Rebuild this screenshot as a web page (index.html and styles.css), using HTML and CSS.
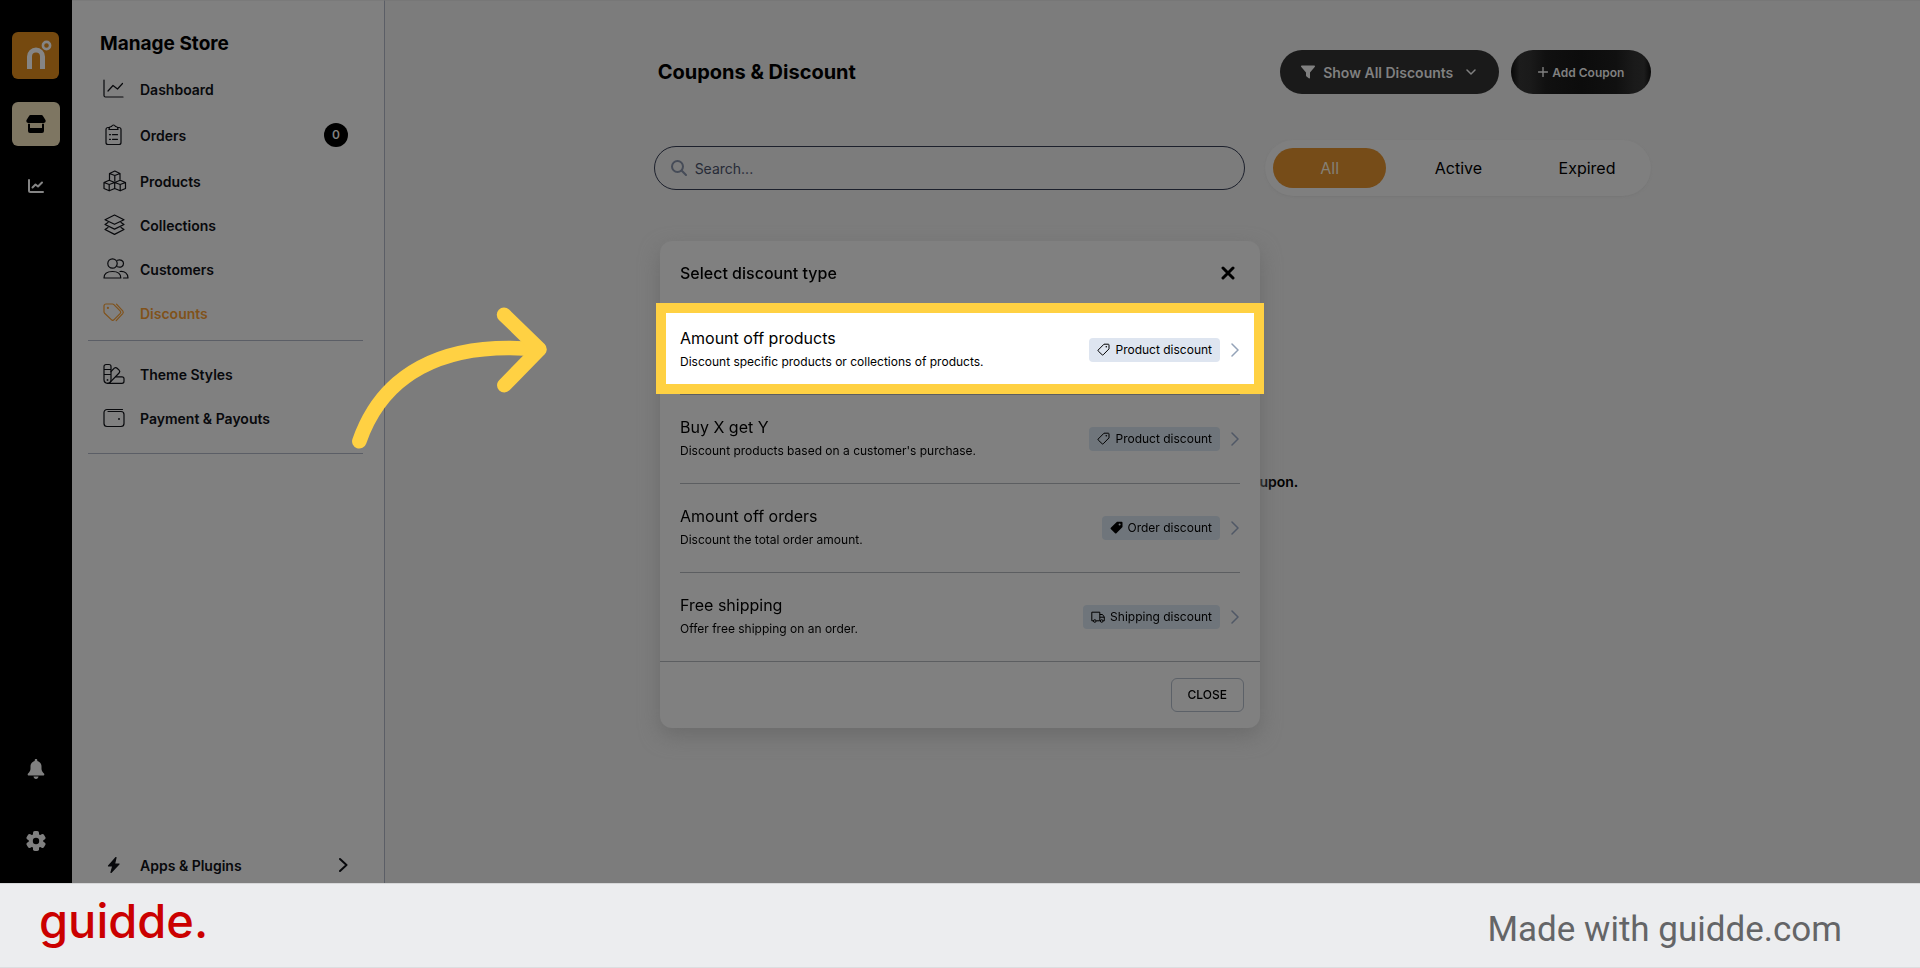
FILE: index.html
```html
<!DOCTYPE html>
<html lang="en">
<head>
<meta charset="utf-8">
<meta name="viewport" content="width=device-width, initial-scale=1">
<title>Coupons &amp; Discount</title>
<link rel="stylesheet" href="styles.css">
</head>
<body>
<div class="app">
  <nav class="rail" aria-label="Workspace">
    <a class="rail-logo" href="#" aria-label="Home">
      <svg width="47" height="47" viewBox="0 0 47 47" fill="none" stroke="#858585">
        <path d="M17.500 37V24.500a6.500 6.500 0 0 1 13 0V37" stroke-width="5"/>
        <circle cx="34.500" cy="13.500" r="3.600" stroke-width="2.600"/>
      </svg>
    </a>
    <a class="rail-item rail-item-active" href="#" aria-label="Store">
      <svg width="20" height="20" viewBox="0 0 20 20" fill="#000">
        <path d="M4.500 1h11c.6 0 1 .3 1.300.8l2.500 4c.9 1.500 0 3.200-1.700 3.200H2.400C.7 9-.2 7.300.7 5.800l2.500-4C3.500 1.300 3.900 1 4.500 1z"/>
        <path d="M2 9.800h2V14h12V9.800h2V17a2 2 0 0 1-2 2H4a2 2 0 0 1-2-2z"/>
      </svg>
    </a>
    <a class="rail-item" href="#" aria-label="Analytics">
      <svg width="16" height="16" viewBox="0 0 16 16" fill="none" stroke="#858585" stroke-width="2" stroke-linecap="round" stroke-linejoin="round">
        <path d="M1 2v10.500c0 .8.700 1.500 1.500 1.500H15"/><path d="M4.500 9.500l3-3 2.500 2L14 4.500"/>
      </svg>
    </a>
    <a class="rail-item rail-push" href="#" aria-label="Notifications">
      <svg width="18" height="20" viewBox="0 0 18 20" fill="#808080">
        <path d="M9 0c.8 0 1.300.5 1.300 1.200v.7c2.600.6 4.200 2.900 4.200 5.500v2.200c0 1.600.6 2.900 1.700 4.100l.8.900c.7.800.2 1.900-.8 1.900H1.800C.8 16.500.3 15.400 1 14.600l.8-.9c1.100-1.200 1.700-2.500 1.700-4.100V7.400c0-2.600 1.600-4.900 4.200-5.500v-.7C7.700.5 8.200 0 9 0z"/>
        <path d="M6.500 17.500h5C11.300 19 10.300 20 9 20s-2.300-1-2.500-2.500z"/>
      </svg>
    </a>
    <a class="rail-item" href="#" aria-label="Settings">
      <svg width="20" height="20" viewBox="0 0 20 20">
        <g fill="#808080"><circle cx="10" cy="10" r="7.300"/>
        <rect x="7" y="0" width="6" height="20" rx="1.800"/>
        <rect x="7" y="0" width="6" height="20" rx="1.800" transform="rotate(60 10 10)"/>
        <rect x="7" y="0" width="6" height="20" rx="1.800" transform="rotate(120 10 10)"/></g>
        <circle cx="10" cy="10" r="3.200" fill="#000"/>
      </svg>
    </a>
  </nav>

  <aside class="sidebar">
    <h2 class="sidebar-title">Manage Store</h2>
    <nav class="menu" aria-label="Manage store">
      <a class="menu-item" href="#">
        <svg class="menu-icon" viewBox="0 0 26 22"><path d="M1 2v15.500c0 .8.700 1.500 1.500 1.500H20"/><path d="M5 13l5-5.500 4.500 3.500L19.500 5.500"/></svg>
        Dashboard
      </a>
      <a class="menu-item menu-item-tall" href="#">
        <svg class="menu-icon" viewBox="0 0 26 22"><path d="M6.500 3.500H5a2 2 0 0 0-2 2v13a2 2 0 0 0 2 2h11a2 2 0 0 0 2-2v-13a2 2 0 0 0-2-2h-1.500"/><path d="M6 5.500c0-2 1-3 2.500-3 .5-1 1-1.500 2-1.500s1.500.5 2 1.500c1.500 0 2.500 1 2.500 3z"/><path d="M6.500 10.700h1M6.500 15.300h1M9.500 10.700h5M9.500 15.300h5"/></svg>
        Orders
        <span class="count">0</span>
      </a>
      <a class="menu-item" href="#">
        <svg class="menu-icon" viewBox="0 0 26 22"><path d="M6.500 9.500V3.500L11.800 1l5.200 2.500v6M6.500 3.500l5.300 2 5.200-2M11.800 5.500V11M1 12.500l5.200-2.300 5.500 2.300v6l-5.500 2.300L1 18.500zM1 12.500l5.200 2 5.500-2M6.200 14.500v6.300M11.700 12.500l5.500-2.300 5.300 2.300v6l-5.300 2.300-5.500-2.300M11.700 12.500l5.500 2 5.300-2M17.200 14.500v6.300"/></svg>
        Products
      </a>
      <a class="menu-item" href="#">
        <svg class="menu-icon" viewBox="0 0 26 22"><path d="M11.500 1L21 5.700l-9.500 4.600L2 5.700z"/><path d="M5 8.500l-3 2 9.500 4.600 9.500-4.600-3-2"/><path d="M5 13.500l-3 2 9.500 4.900 9.500-4.900-3-2"/></svg>
        Collections
      </a>
      <a class="menu-item" href="#">
        <svg class="menu-icon" viewBox="0 0 26 22"><circle cx="9.500" cy="5.500" r="4.700"/><path d="M14.500 2.300c3-1.200 6 .4 6 3.200s-3 4.500-6 3.300"/><path d="M1 20c0-4 3-6.500 8.500-6.500S17.800 16 17.800 20z"/><path d="M17 13.500c4.800-.5 8 2 8 6.500h-4.500"/></svg>
        Customers
      </a>
      <a class="menu-item menu-item-current" href="#" aria-current="page">
        <svg class="menu-icon" viewBox="0 0 26 22"><path d="M1 4a2 2 0 0 1 2-2h6.500c.5 0 1 .2 1.400.6l6.200 6.200c.8.8.8 2 0 2.800l-6 6c-.8.800-2 .800-2.800 0L1.600 11.200A2 2 0 0 1 1 9.800z"/><path d="M13.500 2.200l6.200 6.700c.7.800.7 1.900 0 2.700l-6.500 7"/><circle cx="4.900" cy="5.900" r=".5"/></svg>
        Discounts
      </a>
    </nav>
    <hr class="rule">
    <nav class="menu menu-second" aria-label="Store setup">
      <a class="menu-item" href="#">
        <svg class="menu-icon" viewBox="0 0 26 22"><path d="M3 1.500h3a2 2 0 0 1 2 2v13.300a3.500 3.500 0 0 1-7 0V3.500a2 2 0 0 1 2-2zM1 6.500h7M1 11.500h7"/><path d="M8 8.500l3.300-3.300a2 2 0 0 1 2.800 0l2 2a2 2 0 0 1 0 2.800L7 19.300"/><path d="M13 13.800h6a2 2 0 0 1 2 2v2.500a2 2 0 0 1-2 2H4.500"/><circle cx="4.500" cy="17" r=".3"/></svg>
        Theme Styles
      </a>
      <a class="menu-item" href="#">
        <svg class="menu-icon" viewBox="0 0 26 22"><path d="M19.500 2.500H4a3 3 0 0 0-3 3v11a3 3 0 0 0 3 3h14a3 3 0 0 0 3-3v-9a3 3 0 0 0-3-3H5"/><circle cx="16" cy="12" r=".4"/></svg>
        Payment &amp; Payouts
      </a>
    </nav>
    <hr class="rule">
    <a class="menu-item apps" href="#">
      <svg class="menu-icon" viewBox="0 0 26 22"><path d="M13 3.500L5.500 12h4.300L8 18.500 16 10h-4.500z" fill="currentColor"/></svg>
      Apps &amp; Plugins
      <svg class="apps-arrow" width="9" height="16" viewBox="0 0 9 16"><path d="M1 2l6.500 6L1 14"/></svg>
    </a>
  </aside>

  <main class="main">
    <div class="content">
      <header class="page-head">
        <h1 class="page-title">Coupons &amp; Discount</h1>
        <div class="filter">
          <svg width="14" height="14" viewBox="0 0 14 14" fill="#808080"><path d="M1 .5h12c.9 0 1.300 1 .7 1.600L9 7.500v5.300c0 .7-.7.9-1.200.5l-2.300-1.800c-.3-.2-.5-.5-.5-.9V7.500L.3 2.100C-.3 1.500.1.500 1 .5z"/></svg>
          <select class="filter-select" aria-label="Filter discounts"><option>Show All Discounts</option></select>
          <svg width="10" height="6" viewBox="0 0 10 6" fill="none" stroke="#808080" stroke-width="1.500" stroke-linecap="round" stroke-linejoin="round"><path d="M1 1l4 4 4-4"/></svg>
        </div>
        <button class="add" type="button">
          <svg width="10" height="10" viewBox="0 0 10 10" stroke="#808080" stroke-width="1.400" stroke-linecap="round"><path d="M5 .5v9M.5 5h9"/></svg>
          Add Coupon
        </button>
      </header>

      <div class="tools">
        <label class="search">
          <svg width="16" height="16" viewBox="0 0 16 16" fill="none" stroke="#464c58" stroke-width="2" stroke-linecap="round"><circle cx="6.500" cy="6.500" r="5.500"/><path d="M10.800 10.800L15 15"/></svg>
          <input class="search-input" type="text" placeholder="Search..." aria-label="Search coupons">
        </label>
        <div class="tabs">
          <button class="tab tab-on" type="button">All</button>
          <button class="tab" type="button">Active</button>
          <button class="tab" type="button">Expired</button>
        </div>
      </div>

      <p class="empty">Get started with creating your first coupon.</p>
    </div>
  </main>
</div>

<footer class="footer">
  <span class="brand">guidde.</span>
  <span class="made">Made with guidde.com</span>
</footer>

<div class="layer">
  <section class="modal" role="dialog" aria-labelledby="modal-title">
    <svg class="arrow" width="216" height="152" viewBox="0 0 216 152" fill="none" stroke="#ffd143" stroke-width="14.500" stroke-linecap="round" stroke-linejoin="round">
      <path d="M15.300 141.300C38 76 96 40 195 49.500"/><path d="M160 14.700l35.500 34.600-35.200 36"/>
    </svg>
    <header class="modal-head">
      <h2 class="modal-title" id="modal-title">Select discount type</h2>
      <button class="modal-x" type="button" aria-label="Close dialog">
        <svg width="14" height="14" viewBox="0 0 14 14" stroke="#000" stroke-width="3" stroke-linecap="round"><path d="M2 2l10 10M12 2L2 12"/></svg>
      </button>
    </header>
    <div class="types">
      <a class="type type-focus" href="#">
        <span class="type-text"><span class="type-name">Amount off products</span><span class="type-note">Discount specific products or collections of products.</span></span>
        <span class="badge"><svg width="13" height="13" viewBox="0 0 13 13"><path class="line" d="M7 1.200h4.300c.4 0 .7.300.7.700v4L6.200 11.800c-.3.300-.7.300-1 0L1.200 8c-.3-.3-.3-.7 0-1z"/><circle cx="9.300" cy="3.800" r=".8"/></svg>Product discount</span>
        <svg class="go" width="8" height="14" viewBox="0 0 8 14"><path d="M1 1l6 6-6 6"/></svg>
      </a>
      <a class="type" href="#">
        <span class="type-text"><span class="type-name">Buy X get Y</span><span class="type-note">Discount products based on a customer's purchase.</span></span>
        <span class="badge"><svg width="13" height="13" viewBox="0 0 13 13"><path class="line" d="M7 1.200h4.300c.4 0 .7.300.7.700v4L6.200 11.800c-.3.300-.7.300-1 0L1.200 8c-.3-.3-.3-.7 0-1z"/><circle cx="9.300" cy="3.800" r=".8"/></svg>Product discount</span>
        <svg class="go" width="8" height="14" viewBox="0 0 8 14"><path d="M1 1l6 6-6 6"/></svg>
      </a>
      <a class="type" href="#">
        <span class="type-text"><span class="type-name">Amount off orders</span><span class="type-note">Discount the total order amount.</span></span>
        <span class="badge"><svg width="13" height="13" viewBox="0 0 13 13"><path d="M7 .7h4.600c.5 0 .9.400.9.900v4.300L6.400 12.200c-.4.400-.9.400-1.300 0L.8 8.100c-.4-.4-.4-.9 0-1.300z"/><circle cx="9.600" cy="3.600" r="1" fill="#6f757b"/></svg>Order discount</span>
        <svg class="go" width="8" height="14" viewBox="0 0 8 14"><path d="M1 1l6 6-6 6"/></svg>
      </a>
      <a class="type" href="#">
        <span class="type-text"><span class="type-name">Free shipping</span><span class="type-note">Offer free shipping on an order.</span></span>
        <span class="badge"><svg width="14" height="12" viewBox="0 0 14 12"><path class="line" d="M2.300 9.800H.8V1.200h8v8.600H5.300M8.800 3.500h2.700L13.300 6v3.800h-1.200M9 9.800h.2M8.800 6.200h4.300"/><circle class="line" cx="3.800" cy="10" r="1.300"/><circle class="line" cx="10.700" cy="10" r="1.300"/></svg>Shipping discount</span>
        <svg class="go" width="8" height="14" viewBox="0 0 8 14"><path d="M1 1l6 6-6 6"/></svg>
      </a>
    </div>
    <footer class="modal-foot"><button class="close" type="button">CLOSE</button></footer>
  </section>
</div>
</body>
</html>
```
FILE: styles.css
```css
* { box-sizing: border-box; }
body {
  margin: 0;
  height: 100vh;
  display: flex;
  flex-direction: column;
  font-family: Inter, "Liberation Sans", sans-serif;
  font-size: 14px;
  color: #08090c;
  background: #7c7c7c;
}
a { color: inherit; text-decoration: none; }
button, input, select { font: inherit; color: inherit; border: 0; padding: 0; background: none; }
h1, h2, p { margin: 0; }
svg { display: block; flex: none; }

.app { flex: 1; min-height: 0; display: flex; overflow: hidden; }

.rail {
  width: 72px;
  flex: none;
  display: flex;
  flex-direction: column;
  align-items: flex-start;
  padding: 32px 12px 20px;
  background: #000;
}
.rail-logo { border-radius: 6px; background: #75490f; margin-bottom: 23px; }
.rail-item {
  width: 48px;
  height: 44px;
  margin-bottom: 18px;
  border-radius: 6px;
  display: flex;
  align-items: center;
  justify-content: center;
}
.rail-item-active { background: #7e7662; }
.rail-push { margin-top: auto; margin-bottom: 28px; }
.rail-item:last-child { margin-bottom: 0; }

.sidebar {
  width: 313px;
  flex: none;
  display: flex;
  flex-direction: column;
  background: #808080;
  border-top: 1px solid #7a7a7a;
  border-right: 1px solid #5b5e66;
}
.sidebar-title { padding: 31px 28px 0; font-size: 19px; line-height: 24px; font-weight: 700; color: #000; }
.menu { padding: 11px 0 1px; }
.menu-second { padding-bottom: 13px; }
.menu-item {
  display: flex;
  align-items: center;
  height: 44px;
  padding: 0 36px 0 31px;
  gap: 11px;
  font-weight: 600;
}
.menu-item-tall { height: 48px; }
.menu-item-current { color: #80521a; }
.menu-icon {
  width: 26px;
  height: 22px;
  fill: none;
  stroke: currentColor;
  stroke-width: 1.2;
  stroke-linecap: round;
  stroke-linejoin: round;
}
.count {
  margin-left: auto;
  width: 24px;
  height: 24px;
  border-radius: 50%;
  background: #000;
  color: #808080;
  font-size: 12px;
  line-height: 24px;
  text-align: center;
}
.rule { width: 275px; height: 1px; margin: 4px 0 0 16px; border: 0; background: #5b5e66; }
.menu-second + .rule { margin-top: 0; }
.apps { height: 36px; margin-top: auto; }
.apps-arrow { margin-left: auto; fill: none; stroke: currentColor; stroke-width: 2; stroke-linecap: round; stroke-linejoin: round; }

.main { flex: 1; min-width: 0; border-top: 1px solid #777; }
.content { width: 65%; margin: 0 auto; padding-top: 49px; }
.page-head { display: flex; align-items: center; gap: 12px; }
.page-title { flex: 1; padding-left: 4px; font-size: 20px; line-height: 28px; font-weight: 700; color: #000; }
.filter {
  display: flex;
  align-items: center;
  gap: 8px;
  height: 44px;
  padding: 0 23px 0 21px;
  border-radius: 22px;
  background: #1a1a1a;
  color: #808080;
}
.filter-select { appearance: none; font-weight: 600; margin-right: 4px; }
.add {
  display: flex;
  align-items: center;
  justify-content: center;
  gap: 4px;
  height: 44px;
  padding: 0 27px;
  border-radius: 22px;
  color: #808080;
  font-size: 12px;
  font-weight: 600;
  background: linear-gradient(90deg, #080808, #1c1c1c 6%, #1a1a1a 14%, #101010 25%, #0c0c0c 50%, #101010 75%, #1a1a1a 88%, #1c1c1c 95%, #080808);
}
.tools { display: flex; align-items: center; gap: 20px; margin-top: 46px; }
.search {
  flex: 1;
  display: flex;
  align-items: center;
  gap: 8px;
  height: 44px;
  padding: 0 16px;
  border: 1px solid #1c202c;
  border-radius: 22px;
}
.search-input { flex: 1; min-width: 0; outline: 0; }
.search-input::placeholder { color: #272b37; opacity: 1; }
.tabs {
  flex: none;
  width: 386px;
  display: grid;
  grid-template-columns: repeat(3, 1fr);
  gap: 16px;
  padding: 8px;
  border-radius: 28px;
  background: #7f7f7f;
  box-shadow: 0 1px 2px #777;
}
.tab { height: 40px; border-radius: 20px; font-size: 16px; color: #000; }
.tab-on { background: #764c18; color: #858075; }
.empty { margin-top: 276px; line-height: 20px; font-weight: 600; text-align: center; color: #000; }

.footer {
  flex: none;
  display: flex;
  align-items: center;
  justify-content: space-between;
  height: 85px;
  padding: 0 78px 0 39px;
  border-top: 1px solid #d6d7d8;
  border-bottom: 1px solid #dcdee0;
  background: #ecedef;
}
.brand { font-size: 47px; line-height: 48px; font-weight: 500; color: #cb0000; padding-bottom: 10px; }
.made { font-family: Roboto, sans-serif; font-size: 35px; line-height: 48px; color: #646567; padding-top: 8px; }

.layer { position: fixed; inset: 0; display: grid; place-items: center; }
.modal {
  position: relative;
  width: 600px;
  max-width: 100%;
  border-radius: 12px;
  background: #808080;
  box-shadow: 0 8px 20px #6c6c6c;
}
.arrow { position: absolute; left: -316px; top: 59px; }
.modal-head { display: flex; align-items: center; justify-content: space-between; height: 65px; padding: 0 25px 0 20px; }
.modal-title { font-size: 16px; line-height: 24px; font-weight: 500; color: #000; }
.types { padding: 0 20px; }
.type {
  position: relative;
  isolation: isolate;
  display: flex;
  align-items: center;
  gap: 10px;
  height: 89px;
  border-bottom: 1px solid #5c5e61;
  color: #000;
}
.type:last-child { height: 88px; border-bottom: 0; }
.type-focus::before {
  content: "";
  position: absolute;
  z-index: -1;
  inset: -3px -24px 0;
  border: 10px solid #ffd143;
  background: #fff;
}
.type-text { flex: 1; display: grid; gap: 4px; padding-bottom: 4px; }
.type-name { font-size: 16px; line-height: 24px; }
.type-note { font-size: 12px; line-height: 16px; }
.badge {
  display: flex;
  align-items: center;
  gap: 5px;
  height: 24px;
  padding: 0 8px;
  border-radius: 4px;
  background: #6f757b;
  font-size: 12px;
}
.type-focus .badge { background: #dee5f0; }
.badge .line { fill: none; stroke: currentColor; stroke-width: 1; stroke-linejoin: round; }
.go { margin: 0 1px; fill: none; stroke: #505866; stroke-width: 1.5; stroke-linecap: round; }
.type-focus .go { stroke: #94a3b8; }
.modal-foot { display: flex; justify-content: flex-end; padding: 16px; border-top: 1px solid #5c5e61; }
.close { height: 34px; padding: 0 16px; border: 1px solid #5c6168; border-radius: 6px; font-size: 12px; font-weight: 500; color: #000; }
```
